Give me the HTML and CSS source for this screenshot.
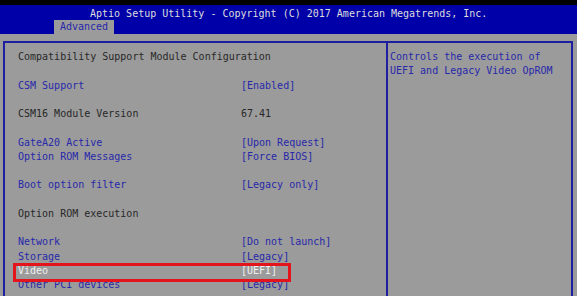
FILE: index.html
```html
<!DOCTYPE html>
<html>
<head>
    <title>Aptio Setup Utility</title>
    <link rel="stylesheet" href="styles.css">
</head>
<body>
    <div class="topbar"></div>
    <div class="header">
        <div class="title">Aptio Setup Utility - Copyright (C) 2017 American Megatrends, Inc.</div>
        <div class="tabs">
            <span class="tab">Advanced</span>
        </div>
    </div>
    <div class="screen">
        <div class="frame">
            <div class="menu">
                <div class="row plain"><span>Compatibility Support Module Configuration</span></div>
                <div class="row"></div>
                <div class="row item"><span>CSM Support</span><span>[Enabled]</span></div>
                <div class="row"></div>
                <div class="row plain"><span>CSM16 Module Version</span><span>67.41</span></div>
                <div class="row"></div>
                <div class="row item"><span>GateA20 Active</span><span>[Upon Request]</span></div>
                <div class="row item"><span>Option ROM Messages</span><span>[Force BIOS]</span></div>
                <div class="row"></div>
                <div class="row item"><span>Boot option filter</span><span>[Legacy only]</span></div>
                <div class="row"></div>
                <div class="row plain"><span>Option ROM execution</span></div>
                <div class="row"></div>
                <div class="row item"><span>Network</span><span>[Do not launch]</span></div>
                <div class="row item"><span>Storage</span><span>[Legacy]</span></div>
                <div class="row item selected"><span>Video</span><span>[UEFI]</span></div>
                <div class="row item"><span>Other PCI devices</span><span>[Legacy]</span></div>
            </div>
            <div class="help">
                <div class="line">Controls the execution of</div>
                <div class="line">UEFI and Legacy Video OpROM</div>
            </div>
        </div>
    </div>
</body>
</html>
```

FILE: styles.css
```css
body {
    margin: 0;
    background-color: rgb(155, 155, 155);
    font-family: "DejaVu Sans Mono", "Liberation Mono", monospace;
    font-size: 10px;
    overflow: hidden;
}
.topbar {
    height: 5px;
    background-color: rgb(0, 0, 0);
}
.header {
    height: 29px;
    background-color: rgb(0, 0, 168);
    color: rgb(222, 222, 222);
}
.title {
    height: 15px;
    line-height: 18px;
    padding-left: 90px;
}
.tabs {
    padding-left: 54px;
}
.tab {
    display: inline-block;
    height: 14px;
    line-height: 14px;
    width: 60px;
    text-align: center;
    background-color: rgb(155, 155, 155);
    color: rgb(40, 40, 170);
}
.screen {
    padding: 7px 4px 0 3px;
}
.frame {
    display: flex;
    height: 253px;
    border: 2px solid rgb(30, 30, 160);
    border-bottom: none;
}
.menu {
    flex-shrink: 0;
    width: 368px;
    padding: 7px 0 0 13px;
    border-right: 2px solid rgb(30, 30, 160);
}
.help {
    flex: 1;
    padding: 7px 0 0 2px;
    color: rgb(40, 40, 170);
}
.row {
    display: grid;
    grid-template-columns: 223px auto;
    height: 14.25px;
    line-height: 14.25px;
    white-space: pre;
}
.line {
    height: 14.25px;
    line-height: 14.25px;
    white-space: pre;
}
.plain {
    color: rgb(40, 40, 40);
}
.item {
    color: rgb(40, 40, 170);
}
.selected {
    position: relative;
    color: rgb(240, 240, 240);
}
.selected::after {
    content: "";
    position: absolute;
    left: -5px;
    top: -1px;
    width: 272px;
    height: 13px;
    border: 3px solid rgb(228, 20, 28);
}
```
